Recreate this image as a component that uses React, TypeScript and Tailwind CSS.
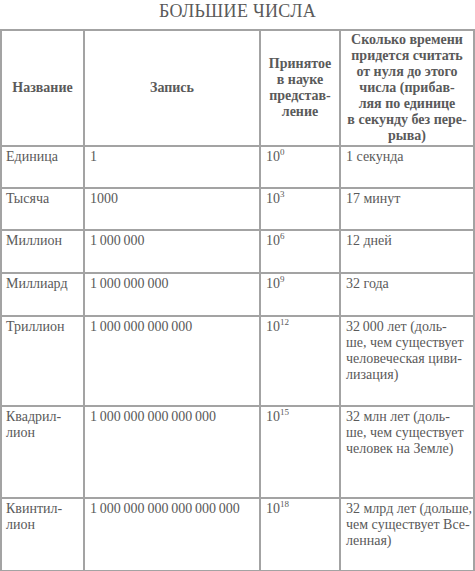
import React from 'react';

type Row = {
  name: React.ReactNode;
  value: string;
  exp: string;
  time: React.ReactNode;
  h: string;
};

const T = '\u2009';

const rows: Row[] = [
  { name: 'Единица', value: '1', exp: '0', time: '1 секунда', h: 'h-[42px]' },
  { name: 'Тысяча', value: '1000', exp: '3', time: '17 минут', h: 'h-[42px]' },
  { name: 'Миллион', value: `1${T}000${T}000`, exp: '6', time: '12 дней', h: 'h-[43px]' },
  { name: 'Миллиард', value: `1${T}000${T}000${T}000`, exp: '9', time: '32 года', h: 'h-[43px]' },
  {
    name: 'Триллион',
    value: `1${T}000${T}000${T}000${T}000`,
    exp: '12',
    time: (
      <>
        32{T}000 лет (доль-
        <br />
        ше, чем существует
        <br />
        человеческая циви-
        <br />
        лизация)
      </>
    ),
    h: 'h-[90px]',
  },
  {
    name: (
      <>
        Квадрил-
        <br />
        лион
      </>
    ),
    value: `1${T}000${T}000${T}000${T}000${T}000`,
    exp: '15',
    time: (
      <>
        32 млн лет (доль-
        <br />
        ше, чем существует
        <br />
        человек на Земле)
      </>
    ),
    h: 'h-[92px]',
  },
  {
    name: (
      <>
        Квинтил-
        <br />
        лион
      </>
    ),
    value: `1${T}000${T}000${T}000${T}000${T}000${T}000`,
    exp: '18',
    time: (
      <>
        32 млрд лет (дольше,
        <br />
        чем существует Все-
        <br />
        ленная)
      </>
    ),
    h: 'h-[73px]',
  },
];

const cell = 'border-2 border-[#a3a3a3] align-top pt-[2px] whitespace-nowrap';
const head = 'border-2 border-[#a3a3a3] align-middle whitespace-nowrap';

export default function App() {
  return (
    <div className="w-[475px] h-[571px] bg-white overflow-hidden text-[#5a5a5a] font-['Liberation_Serif',serif]">
      <h1 className="h-[29px] pt-[1px] text-center text-[18px] leading-[20px] tracking-[0.3px]">БОЛЬШИЕ ЧИСЛА</h1>
      <table className="w-[475px] table-fixed border-collapse text-[14px] leading-[16px]">
        <colgroup>
          <col className="w-[83px]" />
          <col className="w-[176px]" />
          <col className="w-[80px]" />
          <col />
        </colgroup>
        <thead>
          <tr className="h-[116px] font-bold text-center">
            <th className={head}>Название</th>
            <th className={head}>Запись</th>
            <th className={head}>
              Принятое
              <br />в науке
              <br />
              представ-
              <br />
              ление
            </th>
            <th className={head}>
              Сколько времени
              <br />
              придется считать
              <br />
              от нуля до этого
              <br />
              числа (прибав-
              <br />
              ляя по единице
              <br />в секунду без пере-
              <br />
              рыва)
            </th>
          </tr>
        </thead>
        <tbody>
          {rows.map((r, i) => (
            <tr key={i} className={r.h}>
              <td className={`${cell} pl-[4px]`}>{r.name}</td>
              <td className={`${cell} pl-[5px]`}>{r.value}</td>
              <td className={`${cell} pl-[5px]`}>
                10<sup className="text-[9px] -top-[6px]">{r.exp}</sup>
              </td>
              <td className={`${cell} pl-[5px]`}>{r.time}</td>
            </tr>
          ))}
        </tbody>
      </table>
    </div>
  );
}
